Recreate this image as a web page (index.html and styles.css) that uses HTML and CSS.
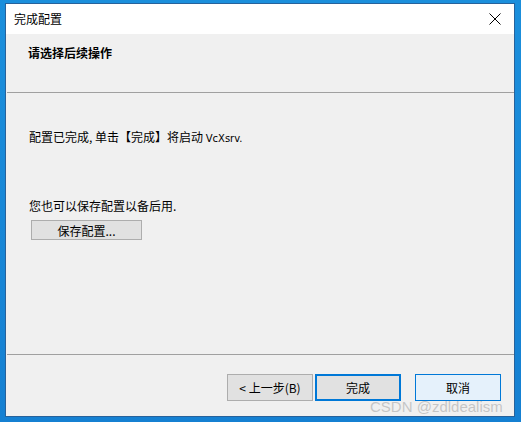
FILE: index.html
```html
<!DOCTYPE html>
<html lang="zh">
<head>
<meta charset="utf-8">
<link rel="stylesheet" href="styles.css">
</head>
<body>
<div class="window">
  <div class="titlebar">
    <span class="title">完成配置</span>
    <svg class="close" width="12" height="12" viewBox="0 0 12 12"><path d="M0.5 0.5 L11.5 11.5 M11.5 0.5 L0.5 11.5" stroke="#000" stroke-width="1" fill="none"/></svg>
  </div>
  <div class="header">
    <div class="heading">请选择后续操作</div>
  </div>
  <div class="sep"></div>
  <div class="content">
    <p class="line1">配置已完成, 单击【完成】将启动 <span class="latin">VcXsrv.</span></p>
    <p class="line2">您也可以保存配置以备后用.</p>
    <button class="btn save">保存配置...</button>
  </div>
  <div class="sep"></div>
  <div class="footer">
    <button class="btn back">&lt; 上一步(B)</button>
    <button class="btn finish">完成</button>
    <button class="btn cancel">取消</button>
  </div>
</div>
<div class="watermark">CSDN @zdldealism</div>
</body>
</html>
```
FILE: styles.css
```css
html, body {
  margin: 0;
  padding: 0;
}
body {
  width: 521px;
  height: 422px;
  background: linear-gradient(180deg, #1b8fdc 0%, #1580d2 100%);
  position: relative;
  overflow: hidden;
  font-family: "Noto Sans CJK SC", "Microsoft YaHei", sans-serif;
  font-size: 12px;
  color: #000;
}
.window {
  position: absolute;
  left: 5px;
  top: 3px;
  width: 508px;
  height: 412px;
  border: 1px solid #27629b;
  background: #f0f0f0;
  display: flex;
  flex-direction: column;
}
.titlebar {
  height: 30px;
  background: #fff;
  display: flex;
  align-items: center;
  justify-content: space-between;
  padding: 0 13px 0 8px;
  flex: none;
}
.title {
  font-size: 12px;
  line-height: 14px;
}
.close {
  display: block;
}
.header {
  height: 58px;
  flex: none;
  padding: 0 0 0 22px;
  box-sizing: border-box;
}
.heading {
  font-weight: bold;
  font-size: 12px;
  line-height: 14px;
  margin-top: 12px;
}
.sep {
  height: 1px;
  background: #a0a0a0;
  margin: 0 0 0 1px;
  flex: none;
}
.content {
  flex: 1;
  padding: 0 0 0 23px;
}
.content p {
  margin: 0;
  font-size: 12px;
  line-height: 14px;
}
.line1 {
  margin-top: 37px !important;
}
.line2 {
  margin-top: 53px !important;
}
.latin {
  font-family: "DejaVu Sans", sans-serif;
  font-size: 10px;
}
.btn {
  font-family: "Noto Sans CJK SC", sans-serif;
  font-size: 12px;
  background: #e1e1e1;
  border: 1px solid #adadad;
  padding: 0;
  margin: 0;
  color: #000;
  display: flex;
  align-items: center;
  justify-content: center;
  box-sizing: border-box;
}
.save {
  width: 111px;
  height: 20px;
  margin-top: 7px;
  margin-left: 2px;
}
.footer {
  height: 61px;
  flex: none;
  display: flex;
  align-items: flex-start;
  padding: 19px 0 0 221px;
  box-sizing: border-box;
}
.footer .btn {
  width: 86px;
  height: 27px;
}
.finish {
  margin-left: 2px;
  border: 2px solid #0078d7 !important;
}
.cancel {
  margin-left: 14px;
  background: #e5f1fb !important;
  border: 1px solid #0078d7 !important;
}
.watermark {
  position: absolute;
  left: 370px;
  top: 398px;
  font-family: "Liberation Sans", Arial, sans-serif;
  font-size: 15px;
  color: rgba(190, 190, 190, 0.85);
  white-space: nowrap;
}
```
